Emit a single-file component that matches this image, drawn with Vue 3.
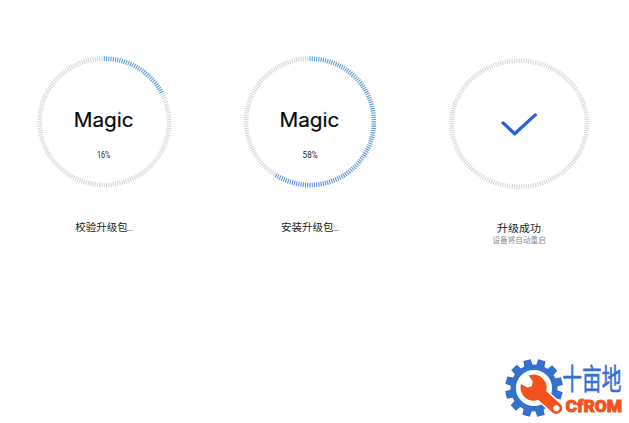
<script setup>
const TICKS = 180

const stages = [
  { id: 'verify', cx: 104.3, cy: 121.8, rx: 67, ry: 65.5, percent: 16, arc: 0.175, title: '校验升级包...' },
  { id: 'install', cx: 310, cy: 121.8, rx: 66.2, ry: 65.5, percent: 58, arc: 0.592, title: '安装升级包...' },
  { id: 'done', cx: 519.3, cy: 123.8, rx: 70, ry: 65.4, percent: null, arc: 0, title: '升级成功', note: '设备将自动重启' },
]

// Each column is 210 units wide; ring centres are stored in page units.
function ticks(s, index) {
  const cx = s.cx - index * 210
  return Array.from({ length: TICKS }, (_, i) => {
    const f = i / TICKS
    const a = f * Math.PI * 2
    const sx = Math.sin(a)
    const cy = -Math.cos(a)
    const t = Math.min(1, f * 2.2)
    return {
      x1: cx + sx * s.rx,
      y1: s.cy + cy * s.ry,
      x2: cx + sx * (s.rx - 4.6),
      y2: s.cy + cy * (s.ry - 4.6),
      color: f < s.arc
        ? `rgb(${Math.round(82 + t * 6)}, ${Math.round(160 - t * 22)}, ${Math.round(214 + t * 6)})`
        : '#d6d6d6',
    }
  })
}

const rings = stages.map((s, i) => ({ ...s, x: s.cx - i * 210, ticks: ticks(s, i) }))
const teeth = Array.from({ length: 12 }, (_, i) => i * 30 + 16)
</script>

<template>
  <main class="screen">
    <div class="stages">
      <section v-for="r in rings" :key="r.id" class="stage">
        <svg class="dial" width="210" height="270" viewBox="0 0 210 270">
          <defs>
            <linearGradient :id="`dot-${r.id}`" gradientUnits="userSpaceOnUse" x1="0" y1="110" x2="0" y2="120">
              <stop offset="0.5" stop-color="#2f6bd6" />
              <stop offset="0.5" stop-color="#080808" />
            </linearGradient>
          </defs>
          <line
            v-for="(t, i) in r.ticks"
            :key="i"
            :x1="t.x1" :y1="t.y1" :x2="t.x2" :y2="t.y2"
            :stroke="t.color"
            stroke-width="1.05"
          />
          <template v-if="r.percent !== null">
            <text class="brand" :x="r.x - 30.6" y="127" textLength="60" lengthAdjust="spacingAndGlyphs">Mag<tspan :fill="`url(#dot-${r.id})`" :stroke="`url(#dot-${r.id})`">i</tspan>c</text>
            <text class="percent" :x="r.x - 7.4" y="157.7" :textLength="r.percent === 16 ? 13.5 : 15" lengthAdjust="spacingAndGlyphs">{{ r.percent }}%</text>
            <text class="title" :x="r.x - 29" y="230.6">{{ r.title.slice(0, 5) }}<tspan class="dots">{{ r.title.slice(5) }}</tspan></text>
          </template>
          <template v-else>
            <path class="check" d="M83 122.9 94.7 133.7 115.3 114.9" />
            <text class="title" x="77" y="232.2" textLength="44" lengthAdjust="spacingAndGlyphs">{{ r.title }}</text>
            <text class="note" x="72.4" y="243.3" textLength="53.4" lengthAdjust="spacingAndGlyphs">{{ r.note }}</text>
          </template>
        </svg>
      </section>
    </div>

    <footer class="foot">
      <svg width="129" height="68" viewBox="0 0 129 68">
        <g transform="translate(34 33)">
          <path
            v-for="a in teeth"
            :key="a"
            class="gear"
            d="M-4.4-21-3.8-28.8H3.8L4.4-21Z"
            :transform="`rotate(${a})`"
          />
          <circle class="gear-ring" r="20.8" />
          <g transform="rotate(-48)">
            <path class="wrench-edge" d="M-4 17V30.2A4 4 0 0 0 4 30.2V17Z" />
            <path
              class="wrench"
              d="M-5.8-12.3-4.1-5.4 0-2.8 4.1-5.4 5.8-12.3C10.3-10 13-5.5 13-.3 13 5 10 9.2 5.8 11V30.2A5.8 5.8 0 0 1-5.8 30.2V11C-10 9.2-13 5-13-.3-13-5.5-10.3-10-5.8-12.3Z"
            />
            <circle class="hole" cy="30.2" r="3" />
          </g>
        </g>
        <text class="cn" transform="translate(62.3 34.5) scale(.68 1)" textLength="87">十亩地</text>
        <text class="en" x="65.6" y="57.4" textLength="56.6" lengthAdjust="spacingAndGlyphs">CfROM</text>
      </svg>
    </footer>
  </main>
</template>

<style>
body {
  margin: 0;
  background: #fff;
}
</style>

<style scoped>
.screen {
  display: flex;
  flex-direction: column;
  justify-content: space-between;
  width: 629px;
  height: 423px;
  overflow: hidden;
  background: #fff;
  font-family: Roboto, "Noto Sans CJK SC", sans-serif;
}
.stages {
  display: grid;
  grid-template-columns: repeat(3, 210px);
}
.dial {
  display: block;
}
.brand {
  font: 400 20px Inter, sans-serif;
  fill: #080808;
  stroke: #080808;
  stroke-width: 0.2;
}
.percent {
  font-size: 8.4px;
  fill: #222;
}
.title {
  font-size: 10.5px;
  fill: #1c1c1c;
}
.dots {
  font-size: 8px;
  letter-spacing: -0.3px;
}
.note {
  font-size: 7.6px;
  fill: #8c8c8c;
}
.check {
  fill: none;
  stroke: #2363dc;
  stroke-width: 3.3;
  stroke-linecap: round;
  stroke-linejoin: round;
}
.foot {
  display: flex;
  justify-content: flex-end;
}
.gear {
  fill: #3470cc;
}
.gear-ring {
  fill: #fff;
  stroke: #3470cc;
  stroke-width: 5.4;
}
.wrench {
  fill: #f4521c;
}
.wrench-edge {
  fill: #fff;
  stroke: #fff;
  stroke-width: 6.5;
}
.hole {
  fill: #fff;
}
.cn {
  font: 400 29px "Noto Sans CJK SC", sans-serif;
  fill: #3470cc;
  stroke: #3470cc;
  stroke-width: 0.6;
}
.en {
  font: 900 16.5px Roboto, sans-serif;
  fill: #f4521c;
  stroke: #f4521c;
  stroke-width: 0.9;
}
</style>
